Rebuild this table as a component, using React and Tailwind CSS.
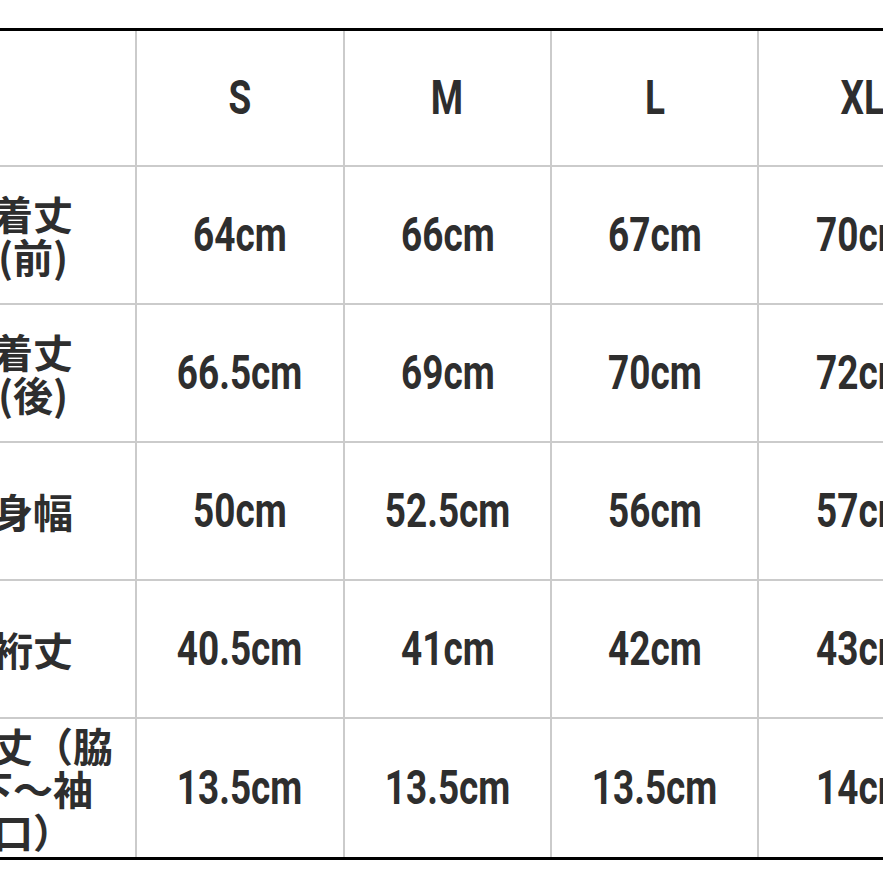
import React from "react";

const sizes = ["S", "M", "L", "XL"];
const rows = [
  { label: ["着丈", "(前)"], values: ["64cm", "66cm", "67cm", "70cm"] },
  { label: ["着丈", "(後)"], values: ["66.5cm", "69cm", "70cm", "72cm"] },
  { label: ["身幅"], values: ["50cm", "52.5cm", "56cm", "57cm"] },
  { label: ["裄丈"], values: ["40.5cm", "41cm", "42cm", "43cm"] },
  { label: ["袖丈（脇", "下～袖", "口）"], values: ["13.5cm", "13.5cm", "13.5cm", "14cm"] },
];

function Num({ children }) {
  return (
    <span
      className="inline-block scale-x-[0.77] text-[48px] font-bold leading-none text-[#2e2e2e] whitespace-nowrap"
      style={{ fontFamily: 'Roboto, "DejaVu Sans", sans-serif' }}
    >
      {children}
    </span>
  );
}

export default function App() {
  return (
    <div className="w-[883px] h-[883px] bg-white overflow-hidden pt-[28px]">
      <div className="ml-[-69px] w-[1035px] border-t-[3px] border-b-[3px] border-black">
        <div className="grid grid-cols-[206px_208px_207px_207px_207px]">
          {/* header */}
          <div className="h-[136px] border-r-2 border-b-2 border-[#cbcbcb]" />
          {sizes.map((s, i) => (
            <div
              key={s}
              className={`h-[136px] border-b-2 border-[#cbcbcb] flex items-center justify-center ${i < 3 ? "border-r-2" : ""}`}
            >
              <Num>{s}</Num>
            </div>
          ))}
          {rows.map((r, ri) => (
            <React.Fragment key={ri}>
              <div
                className={`h-[138px] border-r-2 border-[#cbcbcb] flex items-center justify-center ${ri < rows.length - 1 ? "border-b-2" : "h-[137px]"}`}
              >
                <div
                  className="text-center text-[40px] font-bold leading-[43px] text-[#2e2e2e]"
                  style={{ fontFamily: '"Noto Sans CJK JP", "Noto Sans", sans-serif' }}
                >
                  {r.label.map((l, li) => (
                    <div key={li} className="whitespace-nowrap">{l}</div>
                  ))}
                </div>
              </div>
              {r.values.map((v, vi) => (
                <div
                  key={vi}
                  className={`h-[138px] border-[#cbcbcb] flex items-center justify-center ${vi < 3 ? "border-r-2" : ""} ${ri < rows.length - 1 ? "border-b-2" : "h-[137px]"}`}
                >
                  <Num>{v}</Num>
                </div>
              ))}
            </React.Fragment>
          ))}
        </div>
      </div>
    </div>
  );
}
